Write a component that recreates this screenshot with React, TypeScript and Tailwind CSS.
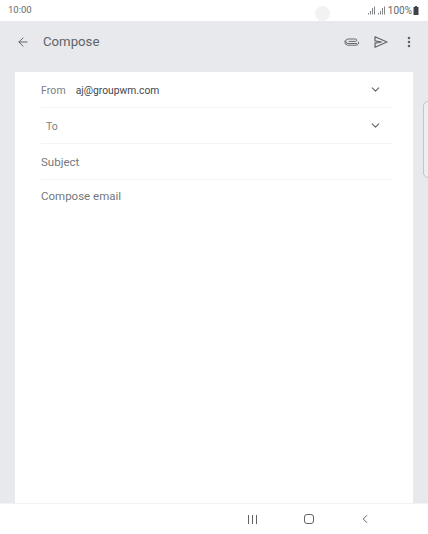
import { ArrowLeft, ChevronDown, ChevronLeft, EllipsisVertical } from "lucide-react";

const Row = ({ children, chevron }: { children: React.ReactNode; chevron?: boolean }) => (
  <div className="h-[36px] flex items-center justify-between border-b border-[#f3f3f5]">
    <div className="flex items-center pt-[2px]">{children}</div>
    {chevron && <ChevronDown size={13} strokeWidth={2} className="text-[#5f6368] mr-[10px]" />}
  </div>
);

const App = () => {
  return (
    <div className="relative w-[428px] h-[534px] overflow-hidden bg-white flex flex-col font-['Roboto',sans-serif]">
      {/* status bar */}
      <div className="h-[21px] shrink-0 flex items-center justify-between pl-[8px] pr-[9px] relative">
        <span className="text-[9.5px] text-[#63676c]">10:00</span>
        <div className="absolute left-[315px] top-[6px] w-[15px] h-[15px] rounded-full bg-[#f2f2f2]" />
        <div className="flex items-center text-[#63676c]">
          <svg width="20" height="9" viewBox="0 0 20 9" fill="currentColor" opacity="0.8" className="mr-[1px]">
            <rect x="1" y="7" width="1" height="1.5" />
            <rect x="3" y="5" width="1" height="3.5" />
            <rect x="5" y="2" width="1" height="6.5" />
            <rect x="7" y="0.5" width="1" height="8" />
            <rect x="11" y="7" width="1" height="1.5" />
            <rect x="13" y="5" width="1" height="3.5" />
            <rect x="15" y="2" width="1" height="6.5" />
            <rect x="17" y="0.5" width="1" height="8" />
          </svg>
          <span className="text-[10px]">100%</span>
          <svg width="6" height="9" viewBox="0 0 6 9" fill="#3f4246" className="ml-[1px]">
            <path d="M2 0h2v1h1.5v8h-5V1H2z" />
          </svg>
        </div>
      </div>

      {/* header + card */}
      <div className="flex-1 bg-[#e8e9ed] flex flex-col min-h-0">
        <div className="h-[41px] shrink-0 flex items-center pl-[16px] text-[#5f6368]">
          <ArrowLeft size={14} strokeWidth={1.7} />
          <span className="ml-[13px] text-[13.2px]">Compose</span>
          <div className="ml-auto flex items-center">
            <svg width="15" height="9" viewBox="0 0 15 9" fill="none" stroke="#666a70" strokeWidth="1" className="mr-[15px]">
              <path d="M13 6.5H4a2 2 0 0 1 0-4.5h7.5a1.2 1.2 0 0 1 0 2.4H4.6" />
              <path d="M3.5 8.2H12a2.5 2.5 0 0 0 2.4-3.5" />
              <path d="M1 3.5v1.5a3 3 0 0 0 2.5 3.2" />
            </svg>
            <svg width="14" height="12" viewBox="0 0 14 12" fill="none" stroke="#5f6368" strokeWidth="1.2" strokeLinejoin="round" className="mr-[14px]">
              <path d="M1 .8 13 6 1 11.2 1 7.2 7.5 6 1 4.8Z" />
            </svg>
            <EllipsisVertical size={14} strokeWidth={2.4} className="mr-[12px]" />
          </div>
        </div>
        <div className="h-[10px] shrink-0" />
        <div className="flex-1 mx-[15px] bg-white pl-[26px] pr-[21px]">
          <Row chevron>
            <span className="text-[10.5px] text-[#7a7e83] tracking-[0.1px]">From</span>
            <span className="ml-[10px] text-[10.3px] text-[#44474b]">aj@groupwm.com</span>
          </Row>
          <Row chevron>
            <span className="ml-[5px] text-[10.5px] text-[#7a7e83]">To</span>
          </Row>
          <Row>
            <span className="text-[11.5px] text-[#74787d]">Subject</span>
          </Row>
          <div className="pt-[7px] text-[11.5px] leading-[18px] text-[#74787d]">Compose email</div>
        </div>
      </div>

      {/* bottom nav */}
      <div className="h-[31px] shrink-0 bg-white border-t border-[#f2f2f4] relative flex items-center text-[#5f6368]">
        <div className="ml-[248px] flex gap-[3px]">
          <div className="w-[1px] h-[9px] bg-[#5f6368]" />
          <div className="w-[1px] h-[9px] bg-[#5f6368]" />
          <div className="w-[1px] h-[9px] bg-[#5f6368]" />
        </div>
        <div className="ml-[47px] w-[10px] h-[10px] rounded-[3px] border border-[#5f6368]" />
        <ChevronLeft size={14} strokeWidth={1.7} className="ml-[44px]" />
      </div>

      {/* side handle */}
      <div className="absolute left-[423px] top-[101px] w-[8px] h-[77px] rounded-l-[5px] border border-[#c4c5c9] bg-[#eeeef1]" />
    </div>
  );
};

export default App;
